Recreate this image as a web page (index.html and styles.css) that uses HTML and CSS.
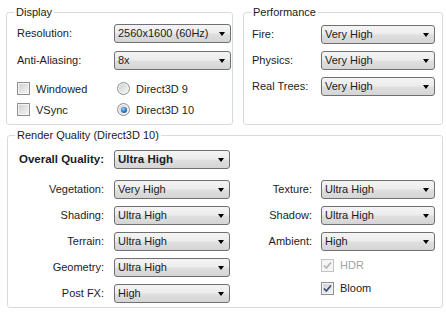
FILE: index.html
```html
<!DOCTYPE html>
<html lang="en">
<head>
    <meta charset="UTF-8">
    <meta name="viewport" content="width=device-width, initial-scale=1.0">
    <title>Graphics Settings</title>
    <link rel="stylesheet" href="styles.css">
</head>
<body>
    <div class="page">
        <fieldset class="group">
            <legend>Display</legend>
            <div class="display-grid">
                <span class="label">Resolution:</span>
                <div class="combo"><span>2560x1600 (60Hz)</span></div>
                <span class="label">Anti-Aliasing:</span>
                <div class="combo"><span>8x</span></div>
                <label class="check"><span class="box"></span>Windowed</label>
                <label class="check"><span class="radio"></span>Direct3D 9</label>
                <label class="check"><span class="box"></span>VSync</label>
                <label class="check"><span class="radio on"></span>Direct3D 10</label>
            </div>
        </fieldset>

        <fieldset class="group">
            <legend>Performance</legend>
            <div class="perf-grid">
                <span class="label">Fire:</span>
                <div class="combo"><span>Very High</span></div>
                <span class="label">Physics:</span>
                <div class="combo"><span>Very High</span></div>
                <span class="label">Real Trees:</span>
                <div class="combo"><span>Very High</span></div>
            </div>
        </fieldset>

        <fieldset class="group render">
            <legend>Render Quality (Direct3D 10)</legend>
            <div class="render-grid">
                <span class="label left-col bold">Overall Quality:</span>
                <div class="combo bold"><span>Ultra High</span></div>
                <span></span><span></span>

                <span class="label left-col">Vegetation:</span>
                <div class="combo"><span>Very High</span></div>
                <span class="label right-col">Texture:</span>
                <div class="combo"><span>Ultra High</span></div>

                <span class="label left-col">Shading:</span>
                <div class="combo"><span>Ultra High</span></div>
                <span class="label right-col">Shadow:</span>
                <div class="combo"><span>Ultra High</span></div>

                <span class="label left-col">Terrain:</span>
                <div class="combo"><span>Ultra High</span></div>
                <span class="label right-col">Ambient:</span>
                <div class="combo"><span>High</span></div>

                <span class="label left-col">Geometry:</span>
                <div class="combo"><span>Ultra High</span></div>
                <div class="checks">
                    <label class="check disabled">
                        <span class="box">
                            <svg width="11" height="11" viewBox="0 0 11 11"><path d="M2 5.5 L4.3 8 L9 2.5" fill="none" stroke="#b4b4b4" stroke-width="1.7"/></svg>
                        </span>HDR
                    </label>
                    <label class="check">
                        <span class="box">
                            <svg width="11" height="11" viewBox="0 0 11 11"><path d="M2 5.5 L4.3 8 L9 2.5" fill="none" stroke="#3c4d7a" stroke-width="1.7"/></svg>
                        </span>Bloom
                    </label>
                </div>

                <span class="label left-col">Post FX:</span>
                <div class="combo"><span>High</span></div>
            </div>
        </fieldset>
    </div>
</body>
</html>
```

FILE: styles.css
```css
* {
    margin: 0;
    padding: 0;
    box-sizing: border-box;
}
body {
    font-family: 'Liberation Sans', Arial, sans-serif;
    font-size: 11px;
    color: #1c1c1c;
    background: #fff;
}
.page {
    display: grid;
    grid-template-columns: 227px 200px;
    column-gap: 10px;
    row-gap: 4px;
    padding: 6px 0 0 6px;
}
.group {
    border: 1px solid #d5dcdf;
    border-radius: 3px;
    padding: 0;
    min-width: 0;
}
.group legend {
    margin-left: 7px;
    padding: 0 2px;
    line-height: 13px;
    color: #1a1a1a;
}
.render {
    grid-column: 1 / 3;
    width: 436px;
    margin-left: 1px;
}
.label {
    line-height: 19px;
    white-space: nowrap;
}
.left-col {
    text-align: right;
    padding-right: 10px;
}
.right-col {
    text-align: right;
    padding-right: 9px;
}
.bold {
    font-weight: bold;
    font-size: 11.5px;
}

/* combo boxes */
.combo {
    position: relative;
    height: 19px;
    border: 1px solid #707070;
    border-radius: 3px;
    background: linear-gradient(#f4f4f4 0%, #ececec 48%, #dfdfdf 52%, #d5d5d5 100%);
    padding: 0 14px 0 3px;
    line-height: 17px;
    white-space: nowrap;
    overflow: hidden;
}
.combo::after {
    content: '';
    position: absolute;
    right: 5px;
    top: 7px;
    border-left: 3.5px solid transparent;
    border-right: 3.5px solid transparent;
    border-top: 4px solid #000;
}

/* display */
.display-grid {
    display: grid;
    grid-template-columns: 97px 117px;
    grid-template-rows: 27px 27px 21px 21px;
    align-items: start;
    padding: 5px 0 4px 10px;
}
.display-grid .check {
    align-self: center;
}
.display-grid .check:nth-of-type(even) {
    padding-left: 3px;
}

/* performance */
.perf-grid {
    display: grid;
    grid-template-columns: 69px 114px;
    grid-template-rows: 26px 26px 26px;
    align-items: start;
    padding: 6px 7px 0 8px;
}

/* render quality */
.render-grid {
    display: grid;
    grid-template-columns: 106px 116px 91px 114px;
    grid-template-rows: 30px 26px 26px 26px 26px 19px;
    align-items: start;
    padding: 8px 7px 4px 0;
}
.checks {
    grid-column: 3 / 5;
    grid-row: 5 / 7;
    display: flex;
    flex-direction: column;
    gap: 9px;
    padding-left: 91px;
}

/* check boxes and radios */
.check {
    display: flex;
    align-items: center;
    gap: 6px;
    height: 14px;
    white-space: nowrap;
}
.check.disabled {
    color: #a3a3a3;
}
.box,
.radio {
    width: 13px;
    height: 13px;
    flex: none;
    border: 1px solid #8e8f8f;
    background: linear-gradient(135deg, #cbced2 0%, #e6e7e8 60%, #f6f6f6 100%);
    box-shadow: inset 0 0 0 1px #f4f4f4;
    display: flex;
    align-items: center;
    justify-content: center;
}
.disabled .box {
    border-color: #c4c4c4;
    background: #f4f4f4;
}
.radio {
    border-radius: 50%;
}
.radio.on::after {
    content: '';
    width: 6px;
    height: 6px;
    border-radius: 50%;
    background: radial-gradient(circle at 40% 35%, #9fd4f7 0%, #2c78c4 50%, #1a3f78 100%);
}
```
